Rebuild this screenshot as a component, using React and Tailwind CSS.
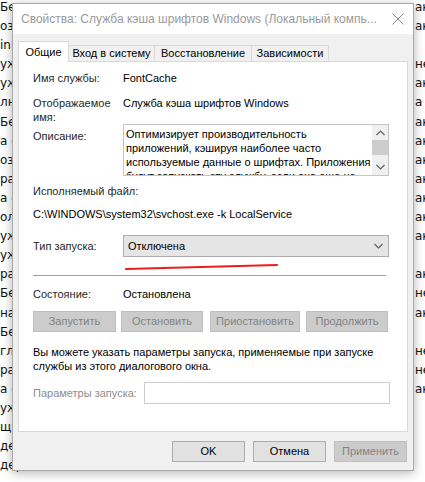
const leftCol = [
  "Бесп", "озво", "inHe", "ужб", "ужб", "лнит", "Бесп", "а сл", "озво", "рав", "а сл", "олуч",
  "ужб", "ужб", "рав", "Бесп", "на с", "Бесп", "глас", "рав", "а сл", "ужб", "щит", "дер", "дер",
]

const rightCol = [
  "ак", "ак", "", "не", "ак", "а", "ак", "ак", "ак", "ак", "ак", "ак",
  "ак", "", "ак", "не", "ак", "", "не", "не", "ак", "", "", "", "",
]

const description = [
  "Оптимизирует производительность",
  "приложений, кэшируя наиболее часто",
  "используемые данные о шрифтах. Приложения",
  "будут запускать эту службу, если она еще не",
]

function Btn({ children, disabled, className = "" }) {
  return (
    <div
      className={
        "h-[21px] flex items-center justify-center border text-[11px] whitespace-nowrap " +
        (disabled
          ? "bg-[#cccccc] border-[#bfbfbf] text-[#838383] "
          : "bg-[#e1e1e1] border-[#adadad] text-black ") +
        className
      }
    >
      {children}
    </div>
  )
}

function Chevron({ up }) {
  return (
    <svg width="9" height="6" viewBox="0 0 9 6" className="text-[#606060]">
      <path
        d={up ? "M0.5 5 L4.5 1 L8.5 5" : "M0.5 1 L4.5 5 L8.5 1"}
        fill="none"
        stroke="currentColor"
        strokeWidth="1.2"
      />
    </svg>
  )
}

export default function App() {
  return (
    <div className="relative w-[425px] h-[482px] overflow-hidden bg-white font-['Liberation_Sans',Arial,sans-serif] text-[11px] text-black">
      {/* services list behind the dialog */}
      <div className="flex justify-between -mt-[2px] font-['DejaVu_Sans',sans-serif]">
        <div className="flex flex-col">
          {leftCol.map((t, i) => (
            <div key={i} className="h-[19.1px] leading-[19px] text-[12px] text-[#111]">
              {t}
            </div>
          ))}
        </div>
        <div className="flex flex-col w-[10px] overflow-hidden">
          {rightCol.map((t, i) => (
            <div key={i} className="h-[19.1px] leading-[19px] text-[12px] text-[#111] whitespace-nowrap">
              {t}
            </div>
          ))}
        </div>
      </div>

      {/* properties window */}
      <div className="absolute left-[12px] top-[3px] w-[402px] h-[468px] border border-[#a9a9a9] bg-[#f0f0f0] shadow-[0_2px_10px_rgba(0,0,0,0.3)] flex flex-col">
        <div className="h-[30px] bg-white flex items-center justify-between pl-[8px] pr-[9px] shrink-0">
          <span className="text-[12px] text-[#9a9a9a] whitespace-nowrap">
            Свойства: Служба кэша шрифтов Windows (Локальный компь...
          </span>
          <svg width="12" height="12" viewBox="0 0 12 12" className="text-[#8a8a8a]">
            <path d="M0.5 0.5 L11.5 11.5 M11.5 0.5 L0.5 11.5" stroke="currentColor" strokeWidth="1" />
          </svg>
        </div>

        <div className="flex flex-col px-[5px] pt-[7px]">
          {/* tabs */}
          <div className="flex items-end h-[21px] relative z-10 whitespace-nowrap">
            <div className="w-[51px] h-[21px] bg-white border border-[#d9d9d9] border-b-0 flex items-center justify-center">
              Общие
            </div>
            <div className="w-[86px] h-[17px] border border-[#d9d9d9] border-l-0 bg-[#f0f0f0] flex items-center justify-center">
              Вход в систему
            </div>
            <div className="w-[97px] h-[17px] border border-[#d9d9d9] border-l-0 bg-[#f0f0f0] flex items-center justify-center">
              Восстановление
            </div>
            <div className="w-[77px] h-[17px] border border-[#d9d9d9] border-l-0 bg-[#f0f0f0] flex items-center justify-center">
              Зависимости
            </div>
          </div>

          {/* general tab page */}
          <div className="relative -mt-px h-[371px] bg-white border border-[#d9d9d9] pl-[14px] pr-[17px] flex flex-col leading-[15px]">
            <div className="flex mt-[9px]">
              <div className="w-[90px] text-[#1f1f1f]">Имя службы:</div>
              <div>FontCache</div>
            </div>

            <div className="flex mt-[10px] leading-[14px] h-[28px]">
              <div className="w-[90px] text-[#1f1f1f]">
                Отображаемое
                <br />
                имя:
              </div>
              <div>Служба кэша шрифтов Windows</div>
            </div>

            <div className="flex">
              <div className="w-[90px] mt-[5px] text-[#1f1f1f]">Описание:</div>
              <div className="w-[266px] h-[52px] border border-[#c4c4c4] flex overflow-hidden">
                <div className="flex-1 pl-[2px] pt-[2px] leading-[14px] whitespace-nowrap overflow-hidden">
                  {description.map((line) => (
                    <div key={line}>{line}</div>
                  ))}
                </div>
                <div className="w-[16px] bg-[#f0f0f0] flex flex-col items-center py-[5px]">
                  <Chevron up />
                  <div className="w-[16px] h-[15px] bg-[#cdcdcd] mt-[4px]" />
                  <div className="flex-1" />
                  <Chevron />
                </div>
              </div>
            </div>

            <div className="mt-[8px] text-[#1f1f1f]">Исполняемый файл:</div>
            <div className="mt-[8px]">C:\WINDOWS\system32\svchost.exe -k LocalService</div>

            <div className="flex items-center mt-[13px]">
              <div className="w-[90px] text-[#1f1f1f]">Тип запуска:</div>
              <div className="w-[266px] h-[22px] bg-[#e5e5e5] border border-[#adadad] flex items-center justify-between pl-[4px] pr-[5px]">
                <span>Отключена</span>
                <Chevron />
              </div>
            </div>

            <div className="mt-[18px] h-px bg-[#a0a0a0] w-[353px]" />

            <div className="flex mt-[11px]">
              <div className="w-[90px] text-[#1f1f1f]">Состояние:</div>
              <div>Остановлена</div>
            </div>

            <div className="flex mt-[9px] gap-[5px]">
              <Btn disabled className="w-[83px]">Запустить</Btn>
              <Btn disabled className="w-[82px]">Остановить</Btn>
              <Btn disabled className="w-[90px] ml-[2px]">Приостановить</Btn>
              <Btn disabled className="w-[82px] ml-[1px]">Продолжить</Btn>
            </div>

            <div className="mt-[13px] leading-[14px] w-[360px]">
              Вы можете указать параметры запуска, применяемые при запуске
              <br />
              службы из этого диалогового окна.
            </div>

            <div className="flex items-center mt-[9px]">
              <div className="w-[111px] text-[#8d8d8d] whitespace-nowrap">Параметры запуска:</div>
              <div className="w-[246px] h-[22px] border border-[#cccccc] bg-white" />
            </div>

            {/* red underline stroke */}
            <svg
              className="absolute left-[105px] top-[200px]"
              width="156"
              height="10"
              viewBox="0 0 156 10"
            >
              <path d="M2 7 Q70 5.5 153 3" fill="none" stroke="#ee1c1c" strokeWidth="2.2" strokeLinecap="round" />
            </svg>
          </div>

          <div className="flex justify-end gap-[8px] mt-[9px] pr-[1px]">
            <Btn className="w-[73px]">OK</Btn>
            <Btn className="w-[73px]">Отмена</Btn>
            <Btn disabled className="w-[73px]">Применить</Btn>
          </div>
        </div>
      </div>
    </div>
  )
}
